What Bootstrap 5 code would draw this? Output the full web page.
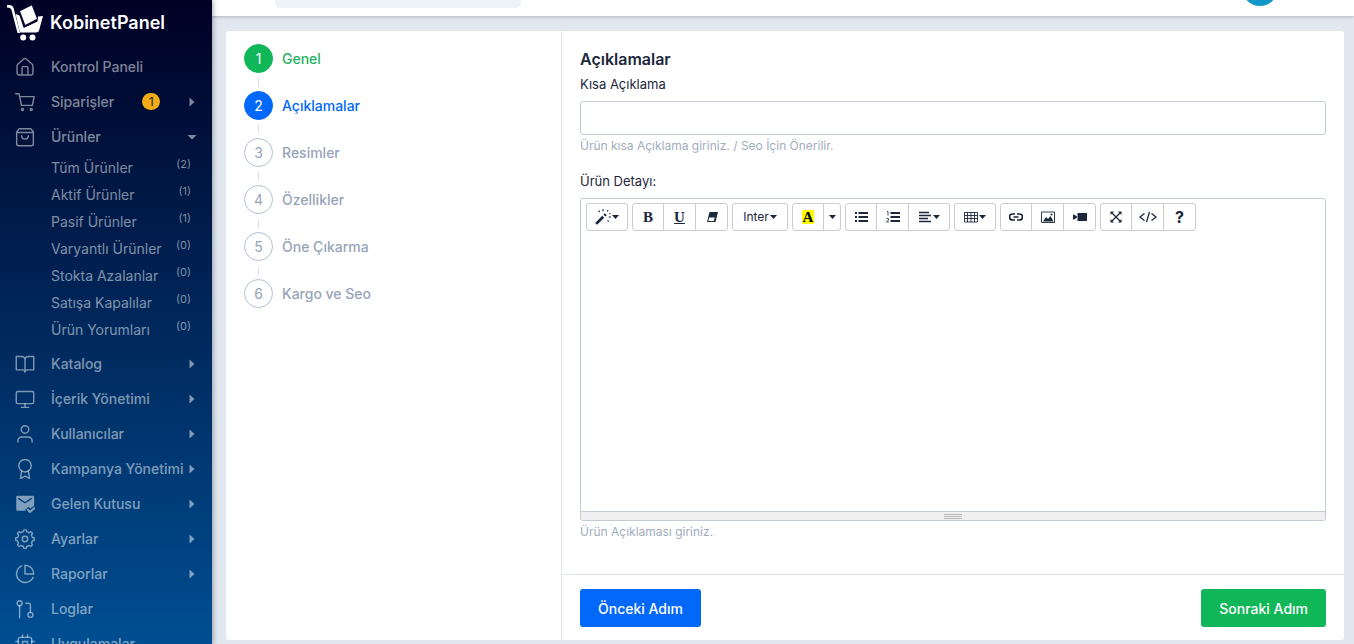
<!DOCTYPE html>
<html lang="tr">
<head>
<meta charset="utf-8">
<meta name="viewport" content="width=device-width, initial-scale=1">
<title>KobinetPanel - Ürünler</title>
<link href="https://cdn.jsdelivr.net/npm/bootstrap@5.3.0/dist/css/bootstrap.min.css" rel="stylesheet">
<style>
  :root { --line: #c0ccda; --ink: #1c273c; --brand: #0168fa; --ok: #10b759; --muted: #97a3b9; }
  body { font-family: Inter, "Liberation Sans", sans-serif; font-size: 14px; color: var(--ink); background: #e1e7ef; }
  svg { display: block; flex: none; }

  .side { width: 212px; height: 100vh; position: sticky; top: 0; background: linear-gradient(#000024, #004e92); box-shadow: 1px 0 5px rgba(28,39,60,.4); z-index: 2; }
  .brand-row { height: 49px; padding: 4px 7px 0; gap: 7px; font-size: 18px; font-weight: 600; color: #fff; }
  .brand-row span { padding-top: 8px; }
  .side-link { height: 35px; padding: 0 17px 0 15px; color: rgba(255,255,255,.5); font-weight: 500; font-size: 14px; text-decoration: none; white-space: nowrap; }
  .side-link .ico { width: 20px; height: 20px; margin-right: 16px; }
  .ico { fill: none; stroke: currentColor; stroke-width: 1.7; stroke-linecap: round; stroke-linejoin: round; }
  .sub-list { padding: 0 0 3px; }
  .sub-link { height: 27px; padding: 0 21px 0 51px; color: rgba(255,255,255,.5); text-decoration: none; font-size: 14px; }
  .sub-link small { font-size: 11px; padding-bottom: 6px; }
  .count { width: 18px; height: 17px; border-radius: 9px; background: #f2ad16; color: #3b3520; font-size: 12px; line-height: 17px; text-align: center; margin-left: 28px; }
  .arr { width: 6px; height: 10px; fill: currentColor; margin-left: auto; }
  .arr.open { width: 10px; height: 6px; margin-right: -2px; }

  .top-strip { height: 16px; background: #fff; box-shadow: 0 1px 3px rgba(28,39,60,.25); overflow: hidden; clip-path: inset(0 0 -5px 0); padding: 0 76px 0 63px; }
  .top-strip input { width: 246px; height: 38px; margin-bottom: 8px; border: 0; border-radius: 5px; background: #edf2f6; }
  .avatar { width: 36px; height: 36px; border-radius: 50%; border: 0; background: #1397cb; margin-bottom: 10px; }

  .wizard { margin: 15px 10px 4px 14px; background: #fff; border-radius: 3px; }
  .steps { width: 336px; border-right: 1px solid #dfe4ee; padding: 13px 18px; }
  .step { color: var(--muted); font-weight: 500; text-decoration: none; gap: 9px; font-size: 14px; height: 29px; }
  .step b { width: 29px; height: 29px; border: 1px solid #b4bfd1; border-radius: 50%; font-weight: 400; font-size: 14px; line-height: 27px; text-align: center; }
  .step.done { color: #25b364; } .step.done b { background: var(--ok); border-color: var(--ok); color: #fff; }
  .step.now { color: var(--brand); } .step.now b { background: var(--brand); border-color: var(--brand); color: #fff; }
  .joint { width: 1px; height: 9px; margin: 5px 0 4px 14px; background: #dcdfe8; }

  .pane { padding: 18px 18px 33px; }
  .pane h1 { font-size: 16px; line-height: 20px; font-weight: 600; margin: 0 0 5px; }
  .pane label { font-size: 13px; line-height: 20px; margin-bottom: 7px; display: block; }
  .pane .form-control { border: 1px solid var(--line); border-radius: 3px; height: 34px; }
  .hint { font-size: 12px; line-height: 18px; color: #a0adbd; margin-top: 2px; }
  .editor { border: 1px solid var(--line); border-radius: 3px; overflow: hidden; }
  .tools { padding: 4px 5px; gap: 4px; }
  .tools .btn { height: 28px; width: 32px; padding: 0; border: 1px solid #ccc; border-radius: 3px; background: #fff; color: var(--ink); font-size: 12px; display: flex; align-items: center; justify-content: center; gap: 1px; flex: none; }
  .tools .btn + .btn { width: 33px; }
  .tools .btn svg { width: 14px; height: 14px; }
  .tools .btn .wand { width: 16px; height: 16px; }
  .tools .btn .code { width: 18px; }
  .tools .btn .dn { width: 7px; height: 4px; fill: currentColor; }
  .tools .serif { font-family: "Liberation Serif", serif; font-weight: 700; font-size: 15px; }
  .tools .hl { background: #ff0; color: #000; line-height: 14px; padding: 0 1px; }
  .tools .btn.w-wide { width: 42px; } .tools .btn.w-font { width: 56px; } .tools .btn.w-drop { width: 18px; }
  .editor textarea { height: 276px; border: 0; resize: none; display: block; width: 100%; outline: 0; padding: 10px; }
  .grip { height: 9px; border-top: 1px solid var(--line); background: #f0f0f0; padding-top: 1px; }
  .grip i { display: block; width: 18px; border-top: 1px solid #bbb; margin: 1px auto; }
  .foot { border-top: 1px solid #dfe4ee; padding: 14px 18px 13px; }
  .foot .btn { height: 38px; padding: 0 18px; font-size: 14px; font-weight: 500; border: 0; border-radius: 3px; color: #fff; }
  .btn-prev { background: var(--brand); } .btn-next { background: var(--ok); }
</style>
</head>
<body>
<svg width="0" height="0" class="position-absolute" aria-hidden="true">
  <symbol id="right" viewBox="0 0 6 10"><path d="M.5 .5l5 4.500-5 4.500z"/></symbol>
  <symbol id="down" viewBox="0 0 10 6"><path d="M.5 1h9L5 5.500z"/></symbol>
  <symbol id="caret" viewBox="0 0 7 4"><path d="M0 0h7L3.500 4z"/></symbol>
</svg>
<div class="d-flex">
  <aside class="side flex-shrink-0 overflow-hidden">
    <div class="brand-row d-flex align-items-start">
      <svg width="36" height="37" viewBox="0 0 36 37" fill="#fff"><path d="M0 1h2c2.500 0 4 1 4.600 3L13 29h-2.500L4.500 6C4 4.500 2.500 3.800 0 3.500z"/><path d="M8.500 10l4 1.500 4.200 12.500 13.800-6.500.5-5L36 12l-3.800 14c-.5 1.800-1.500 2.500-3.200 2.500H13z"/><path d="M12.500 7L25 .8 30.500 15 18 21.500z" stroke="#00062a" stroke-width=".9"/><circle cx="16.200" cy="33.500" r="3"/><circle cx="25.500" cy="33.500" r="3"/></svg>
      <span class="lh-sm">KobinetPanel</span>
    </div>
    <nav aria-label="Ana menü">
      <a href="#" class="side-link d-flex align-items-center"><svg class="ico" viewBox="0 0 24 24"><path d="M2.500 10.500Q2.500 9.500 3.300 8.800L10.500 2.300Q12 1 13.500 2.300L20.700 8.800Q21.500 9.500 21.500 10.500V19.500a2 2 0 0 1-2 2h-15a2 2 0 0 1-2-2zM8.500 21.500V12.500q0-1 1-1h5q1 0 1 1v9"/></svg>Kontrol Paneli</a>
      <a href="#" class="side-link d-flex align-items-center"><svg class="ico" viewBox="0 0 24 24"><path d="M.8 2h4l3 14h13l2.200-10.500H5.600"/><circle cx="9" cy="21" r="1.200"/><circle cx="19.500" cy="21" r="1.200"/></svg>Siparişler<span class="count">1</span><svg class="arr"><use href="#right"/></svg></a>
      <a href="#" class="side-link d-flex align-items-center" aria-expanded="true"><svg class="ico" viewBox="0 0 24 24"><path d="M2 6l3-4h14l3 4v14a2.500 2.500 0 0 1-2.500 2.500h-15A2.500 2.500 0 0 1 2 20zM2 6.500h20M16 10.500a4 4 0 0 1-8 0"/></svg>Ürünler<svg class="arr open"><use href="#down"/></svg></a>
      <div class="sub-list">
        <a href="#" class="sub-link d-flex align-items-center justify-content-between">Tüm Ürünler<small>(2)</small></a>
        <a href="#" class="sub-link d-flex align-items-center justify-content-between">Aktif Ürünler<small>(1)</small></a>
        <a href="#" class="sub-link d-flex align-items-center justify-content-between">Pasif Ürünler<small>(1)</small></a>
        <a href="#" class="sub-link d-flex align-items-center justify-content-between">Varyantlı Ürünler<small>(0)</small></a>
        <a href="#" class="sub-link d-flex align-items-center justify-content-between">Stokta Azalanlar<small>(0)</small></a>
        <a href="#" class="sub-link d-flex align-items-center justify-content-between">Satışa Kapalılar<small>(0)</small></a>
        <a href="#" class="sub-link d-flex align-items-center justify-content-between">Ürün Yorumları<small>(0)</small></a>
      </div>
      <a href="#" class="side-link d-flex align-items-center"><svg class="ico" viewBox="0 0 24 24"><path d="M1.500 3H8a4 4 0 0 1 4 3.500V22c0-2-1.500-3-3-3H1.500zM22.500 3H16a4 4 0 0 0-4 3.500V22c0-2 1.500-3 3-3h7.500z"/></svg>Katalog<svg class="arr"><use href="#right"/></svg></a>
      <a href="#" class="side-link d-flex align-items-center"><svg class="ico" viewBox="0 0 24 24"><rect x="1.500" y="3" width="21" height="14.500" rx="2"/><path d="M12 17.500V22M7.500 22h9"/></svg>İçerik Yönetimi<svg class="arr"><use href="#right"/></svg></a>
      <a href="#" class="side-link d-flex align-items-center"><svg class="ico" viewBox="0 0 24 24"><circle cx="12" cy="6.500" r="4.500"/><path d="M3.500 21.500V20a4.500 4.500 0 0 1 4.500-4.500h8a4.500 4.500 0 0 1 4.500 4.500v1.500"/></svg>Kullanıcılar<svg class="arr"><use href="#right"/></svg></a>
      <a href="#" class="side-link d-flex align-items-center"><svg class="ico" viewBox="0 0 24 24"><circle cx="12" cy="8" r="7.500"/><path d="M8 14.500L6.500 23.500l5.500-3 5.500 3L16 14.500"/></svg>Kampanya Yönetimi<svg class="arr"><use href="#right"/></svg></a>
      <a href="#" class="side-link d-flex align-items-center"><svg class="ico" viewBox="0 0 24 24"><path d="M3 2h18.500c.8 0 1.500.7 1.500 1.500V14l-4.500 3.500-2.500-2-3.500 3.500V20H3c-.8 0-1.500-.7-1.500-1.500v-15C1.500 2.700 2.200 2 3 2z" fill="currentColor" stroke="none"/><path d="M4.500 5.500l7.500 5 7.500-5" stroke="#00407c"/><path d="M15.500 19l2.500 2.500 5-4.500" stroke-width="2.500"/></svg>Gelen Kutusu<svg class="arr"><use href="#right"/></svg></a>
      <a href="#" class="side-link d-flex align-items-center"><svg class="ico" viewBox="0 0 24 24"><path d="M10 3.200L10.500 1h3l.5 2.200 3 1.300 2-1.300 2 2-1.300 2.200 1.200 2.800 2.300.5v2.800l-2.300.6-1.200 2.900 1.300 2-2 2-2-1.200-3 1.200-.5 2.300h-3l-.5-2.300-3-1.200-2 1.200-2-2 1.300-2-1.200-2.900L.8 13.500v-2.800l2.300-.5 1.200-2.800L3 5.200l2-2 2 1.300z"/><circle cx="12" cy="12" r="3.300"/></svg>Ayarlar<svg class="arr"><use href="#right"/></svg></a>
      <a href="#" class="side-link d-flex align-items-center"><svg class="ico" viewBox="0 0 24 24"><path d="M8 2.300A10.400 10.400 0 1 0 21.800 16M12 1.500V12h10.500A10.500 10.500 0 0 0 12 1.500z"/></svg>Raporlar<svg class="arr"><use href="#right"/></svg></a>
      <a href="#" class="side-link d-flex align-items-center"><svg class="ico" viewBox="0 0 24 24"><circle cx="5.500" cy="5" r="3"/><circle cx="18.500" cy="19" r="3"/><path d="M5.500 8v14.500M13 5h3.500a2 2 0 0 1 2 2v9"/></svg>Loglar</a>
      <a href="#" class="side-link d-flex align-items-center"><svg class="ico" viewBox="0 0 24 24"><rect x="4" y="4" width="16" height="16" rx="2"/><path d="M9 9h6v6H9zM9 1v3M15 1v3M1 9h3M20 9h3M1 15h3M20 15h3"/></svg>Uygulamalar</a>
    </nav>
  </aside>

  <div class="flex-grow-1">
    <header class="top-strip d-flex align-items-end justify-content-between">
      <input type="search" aria-label="Ara">
      <button class="avatar" type="button" aria-label="Hesap"></button>
    </header>
    <main class="wizard d-flex">
      <nav class="steps flex-shrink-0" aria-label="Adımlar">
        <a href="#" class="step done d-flex align-items-center"><b>1</b>Genel</a><div class="joint"></div>
        <a href="#" class="step now d-flex align-items-center"><b>2</b>Açıklamalar</a><div class="joint"></div>
        <a href="#" class="step d-flex align-items-center"><b>3</b>Resimler</a><div class="joint"></div>
        <a href="#" class="step d-flex align-items-center"><b>4</b>Özellikler</a><div class="joint"></div>
        <a href="#" class="step d-flex align-items-center"><b>5</b>Öne Çıkarma</a><div class="joint"></div>
        <a href="#" class="step d-flex align-items-center"><b>6</b>Kargo ve Seo</a>
      </nav>
      <form class="flex-grow-1" onsubmit="return false">
        <div class="pane">
          <h1>Açıklamalar</h1>
          <label for="brief">Kısa Açıklama</label>
          <input id="brief" type="text" class="form-control">
          <div class="hint mb-3">Ürün kısa Açıklama giriniz. / Seo İçin Önerilir.</div>
          <label for="detail">Ürün Detayı:</label>
          <div class="editor">
            <div class="tools d-flex flex-wrap">
              <div class="btn-group"><button type="button" class="btn w-wide" aria-label="Stil"><svg class="wand" viewBox="0 0 14 14"><path d="M1 13l6.200-6.200" stroke="currentColor" stroke-width="2.400"/><path d="M8.200 5.800l1.200-1.200" stroke="currentColor" stroke-width="2.400"/><path d="M7 0v2M3 1.500l1.200 1.200M11.500 1l-1 1M12 7h2M11 10l1 1M12.500 4h1" stroke="currentColor" stroke-width="1"/></svg><svg class="dn"><use href="#caret"/></svg></button></div>
              <div class="btn-group"><button type="button" class="btn serif">B</button><button type="button" class="btn serif text-decoration-underline">U</button><button type="button" class="btn" aria-label="Temizle"><svg viewBox="0 0 14 14"><path d="M4.500 2H13L10.500 12H2zM4.200 7.500L3.300 11h5.500l.9-3.500z" fill="currentColor" fill-rule="evenodd"/></svg></button></div>
              <div class="btn-group"><button type="button" class="btn w-font">Inter<svg class="dn"><use href="#caret"/></svg></button></div>
              <div class="btn-group"><button type="button" class="btn serif"><span class="hl">A</span></button><button type="button" class="btn w-drop" aria-label="Renkler"><svg class="dn"><use href="#caret"/></svg></button></div>
              <div class="btn-group"><button type="button" class="btn" aria-label="Liste"><svg viewBox="0 0 14 14" stroke="currentColor" stroke-width="2"><path d="M1 3h2M1 7h2M1 11h2M4.500 3H14M4.500 7H14M4.500 11H14"/></svg></button><button type="button" class="btn" aria-label="Numaralı liste"><svg viewBox="0 0 14 14" stroke="currentColor" stroke-width="2"><path d="M4.500 3H14M4.500 7H14M4.500 11H14"/><path d="M1 1.500h1v4M.5 8.500h2v1.500l-2 2h2.500" fill="none" stroke-width=".8"/></svg></button><button type="button" class="btn w-wide" aria-label="Paragraf"><svg viewBox="0 0 14 14" stroke="currentColor" stroke-width="1.500"><path d="M1 2.500h10M1 5.500h12M1 8.500h9M1 11.500h12"/></svg><svg class="dn"><use href="#caret"/></svg></button></div>
              <div class="btn-group"><button type="button" class="btn w-wide" aria-label="Tablo"><svg viewBox="0 0 14 14" fill="none" stroke="currentColor" stroke-width=".9"><path d="M.5 2.500h13v9.500H.5zM.5 5.500h13M.5 8.500h13M3.500 2.500V12M7 2.500V12M10.500 2.500V12"/></svg><svg class="dn"><use href="#caret"/></svg></button></div>
              <div class="btn-group"><button type="button" class="btn" aria-label="Bağlantı"><svg viewBox="0 0 14 14" fill="none" stroke="currentColor" stroke-width="1.700"><path d="M6 4H3.500a3 3 0 0 0 0 6H6M8 4h2.500a3 3 0 0 1 0 6H8M4.500 7h5"/></svg></button><button type="button" class="btn" aria-label="Resim"><svg viewBox="0 0 14 14"><path d="M.5 2h13v10.500H.5z" fill="none" stroke="currentColor" stroke-width=".9"/><path d="M2 11.500l3-4.500 2 2 2.500-3 3 5.500z" fill="currentColor"/><circle cx="10.500" cy="4.500" r="1" fill="currentColor"/></svg></button><button type="button" class="btn" aria-label="Video"><svg viewBox="0 0 14 14" fill="currentColor"><path d="M4.500 3H14v8H4.500zM0 4.500h1L4 6.500v1L1 9.500H0z"/></svg></button></div>
              <div class="btn-group"><button type="button" class="btn" aria-label="Tam ekran"><svg viewBox="0 0 14 14" stroke="currentColor" stroke-width="1.300"><path d="M3 3l8 8M11 3l-8 8"/><path d="M1.500 5V1.500H5zM9 1.500h3.500V5zM1.500 9v3.500H5zM9 12.500h3.500V9z" fill="currentColor" stroke="none"/></svg></button><button type="button" class="btn" aria-label="Kod"><svg class="code" viewBox="0 0 18 14" fill="none" stroke="currentColor" stroke-width="1.300"><path d="M5.500 3.500L1 7l4.500 3.500M12.500 3.500L17 7l-4.500 3.500M10.500 2l-3 10"/></svg></button><button type="button" class="btn fw-bold fs-6">?</button></div>
            </div>
            <textarea id="detail"></textarea>
            <div class="grip"><i></i><i></i><i></i></div>
          </div>
          <div class="hint">Ürün Açıklaması giriniz.</div>
        </div>
        <div class="foot d-flex justify-content-between">
          <button type="button" class="btn btn-prev">Önceki Adım</button>
          <button type="button" class="btn btn-next">Sonraki Adım</button>
        </div>
      </form>
    </main>
  </div>
</div>
<script src="https://cdn.jsdelivr.net/npm/bootstrap@5.3.0/dist/js/bootstrap.bundle.min.js"></script>
</body>
</html>
